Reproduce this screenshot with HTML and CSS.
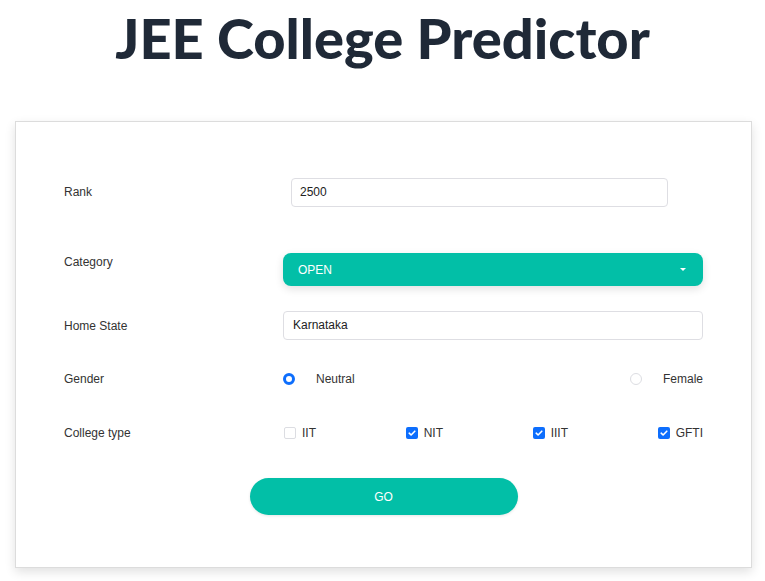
FILE: index.html
```html
<!DOCTYPE html>
<html>
<head>
<meta charset="utf-8">
<link rel="stylesheet" href="styles.css">
</head>
<body>
<h1 class="title">JEE College Predictor</h1>
<div class="card">
  <div class="row row-rank">
    <label class="label">Rank</label>
    <div class="field"><div class="input input-rank">2500</div></div>
  </div>
  <div class="row row-cat">
    <label class="label label-top">Category</label>
    <div class="field">
      <div class="select"><span>OPEN</span><span class="caret"></span></div>
    </div>
  </div>
  <div class="row row-state">
    <label class="label">Home State</label>
    <div class="field"><div class="input input-state">Karnataka</div></div>
  </div>
  <div class="row row-gender">
    <label class="label">Gender</label>
    <div class="field options">
      <span class="opt"><span class="radio checked"></span><span class="radio-text">Neutral</span></span>
      <span class="opt"><span class="radio"></span><span class="radio-text">Female</span></span>
    </div>
  </div>
  <div class="row row-college">
    <label class="label">College type</label>
    <div class="field options">
      <span class="opt"><span class="check"></span><span class="check-text">IIT</span></span>
      <span class="opt"><span class="check on"><svg viewBox="0 0 12 12" width="12" height="12"><path d="M3.2 6.2 L5.1 8 L8.8 4.2" fill="none" stroke="#fff" stroke-width="1.6" stroke-linecap="round" stroke-linejoin="round"/></svg></span><span class="check-text">NIT</span></span>
      <span class="opt"><span class="check on"><svg viewBox="0 0 12 12" width="12" height="12"><path d="M3.2 6.2 L5.1 8 L8.8 4.2" fill="none" stroke="#fff" stroke-width="1.6" stroke-linecap="round" stroke-linejoin="round"/></svg></span><span class="check-text">IIIT</span></span>
      <span class="opt"><span class="check on"><svg viewBox="0 0 12 12" width="12" height="12"><path d="M3.2 6.2 L5.1 8 L8.8 4.2" fill="none" stroke="#fff" stroke-width="1.6" stroke-linecap="round" stroke-linejoin="round"/></svg></span><span class="check-text">GFTI</span></span>
    </div>
  </div>
  <div class="go-wrap"><button class="go">GO</button></div>
</div>
</body>
</html>
```
FILE: styles.css
```css
html, body {
  margin: 0;
  padding: 0;
  background: #fff;
}
body {
  font-family: "Liberation Sans", Arial, sans-serif;
  color: #333;
  width: 765px;
  height: 581px;
  overflow: hidden;
}
.title {
  margin: 0;
  padding-top: 5px;
  height: 116px;
  box-sizing: border-box;
  text-align: center;
  font-family: "Lato", sans-serif;
  font-weight: 900;
  font-size: 56px;
  line-height: 66px;
  color: #1f2937;
  letter-spacing: 0px;
}
.card {
  margin-left: 15px;
  margin-top: 5px;
  width: 737px;
  box-sizing: border-box;
  border: 1px solid #dcdcdc;
  background: #fff;
  box-shadow: 0 4px 10px rgba(0, 0, 0, 0.12);
  padding: 56px 48px 52px 48px;
}
.row {
  display: flex;
  align-items: center;
}
.label {
  width: 219px;
  flex: none;
  font-size: 12px;
  line-height: 14px;
  color: #333;
}
.row-rank .label { margin-top: -1px; }
.label-top {
  align-self: flex-start;
  padding-top: 2px;
}
.field {
  width: 420px;
  flex: none;
}
.row-cat { margin-top: 46px; align-items: flex-start; }
.row-state { margin-top: 25px; }
.row-gender { margin-top: 29px; height: 20px; }
.row-college { margin-top: 34px; height: 20px; }
.input {
  box-sizing: border-box;
  height: 29px;
  border: 1px solid #dedee3;
  border-radius: 4px;
  font-size: 12px;
  line-height: 27px;
  color: #222;
  background: #fff;
}
.input-rank {
  margin-left: 8px;
  width: 377px;
  padding-left: 8px;
}
.input-state {
  width: 420px;
  padding-left: 9px;
}
.select {
  box-sizing: border-box;
  height: 33px;
  border-radius: 8px;
  background: #02bfa7;
  color: #fff;
  font-size: 12px;
  padding: 0 17px 0 15px;
  display: flex;
  align-items: center;
  justify-content: space-between;
  box-shadow: 0 3px 8px rgba(0, 0, 0, 0.12);
}
.caret {
  width: 0;
  height: 0;
  border-left: 3px solid transparent;
  border-right: 3px solid transparent;
  border-top: 3px solid #fff;
}
.options {
  display: flex;
  justify-content: space-between;
  align-items: center;
}
.opt {
  display: flex;
  align-items: center;
  font-size: 12px;
  color: #333;
}
.radio {
  box-sizing: border-box;
  width: 12px;
  height: 12px;
  border-radius: 50%;
  border: 1px solid #dcdde2;
  background: #fff;
  margin-right: 21px;
}
.radio.checked {
  border: 3.5px solid #0d6efd;
}
.check {
  box-sizing: border-box;
  width: 12px;
  height: 12px;
  border-radius: 2px;
  border: 1px solid #dcdde2;
  background: #fff;
  margin-right: 6px;
  margin-left: 1px;
  display: flex;
}
.check.on {
  border: none;
  background: #0d6efd;
}
.check svg { display: block; }
.go-wrap {
  display: flex;
  justify-content: center;
  margin-top: 35px;
}
.go {
  width: 268px;
  height: 37px;
  border: none;
  border-radius: 19px;
  background: #02bfa7;
  color: #fff;
  font-family: "Liberation Sans", Arial, sans-serif;
  font-size: 12px;
  padding: 0;
  box-shadow: 0 1px 3px rgba(0, 0, 0, 0.1);
}
```
